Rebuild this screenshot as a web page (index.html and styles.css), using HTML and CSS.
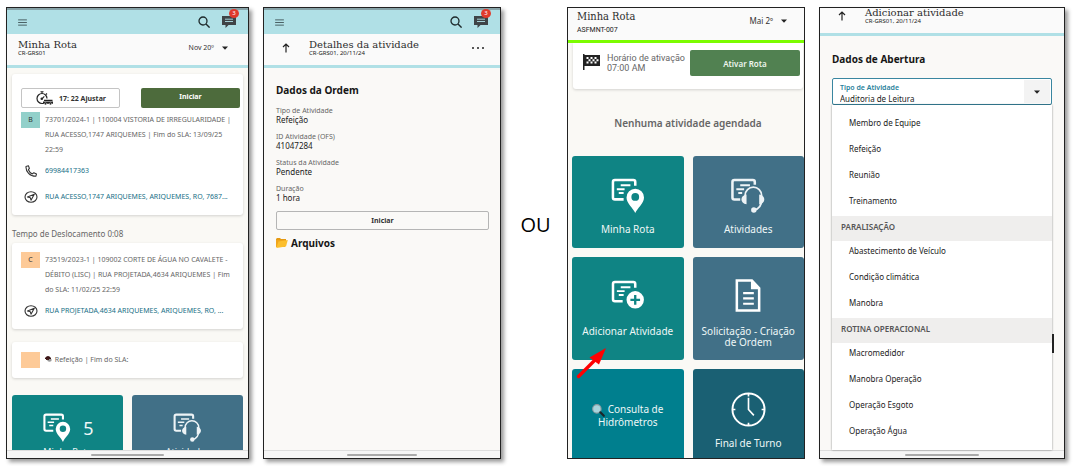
FILE: index.html
```html
<!DOCTYPE html>
<html lang="pt-BR">
<head>
<meta charset="utf-8">
<meta name="viewport" content="width=device-width, initial-scale=1">
<title>Minha Rota</title>
<link rel="stylesheet" href="styles.css">
</head>
<body>
<svg class="defs" aria-hidden="true">
  <symbol id="menu" viewBox="0 0 10 8"><path d="M0 1h10M0 4h10M0 7h10" stroke="#3d5054" stroke-width="1" fill="none"/></symbol>
  <symbol id="search" viewBox="0 0 12 12"><circle cx="5" cy="5" r="4" fill="none" stroke="#1e2a2c" stroke-width="1.3"/><path d="M8 8l3.6 3.6" stroke="#1e2a2c" stroke-width="1.4"/></symbol>
  <symbol id="chat" viewBox="0 0 14 12"><path d="M0 0h14v9H6.500l-3 3V9H0z" fill="#3f4447"/><path d="M3 3.200h8M3 5.500h8" stroke="#b0e0e6" stroke-width=".9"/></symbol>
  <symbol id="up" viewBox="0 0 8 10"><path d="M4 9.500V1M1 4l3-3 3 3" fill="none" stroke="#222" stroke-width="1.2"/></symbol>
  <symbol id="caret" viewBox="0 0 6 4"><path d="M0 .5h6L3 3.700z" fill="#222"/></symbol>
  <symbol id="timer" viewBox="0 0 18 14"><circle cx="7" cy="7.500" r="5" fill="none" stroke="#222" stroke-width="1.200" stroke-dasharray="25 7" stroke-dashoffset="-6"/><path d="M5.500 .7h3M7 .7v1.500M11 2.500l1 1M7 7.800l2.300-2.500" stroke="#222" stroke-width="1.100" fill="none"/><circle cx="6.800" cy="7.800" r="1.300" fill="#222"/><path d="M9 8.800h8.500v1.100H9zM8 10.500h10v2.200H8z" fill="#222"/><circle cx="10.500" cy="12.800" r="1.100" fill="#222" stroke="#fff" stroke-width=".4"/><circle cx="15.500" cy="12.800" r="1.100" fill="#222" stroke="#fff" stroke-width=".4"/></symbol>
  <symbol id="phone" viewBox="0 0 12 12"><path d="M1 1.500C.6 6.500 5 11.400 10.800 11.300L11.500 9 8.800 7.800 7.300 8.900C5.500 8 4.100 6.500 3.400 4.700L4.400 3.400 3.400.8z" fill="none" stroke="#333" stroke-width="1.100" stroke-linejoin="round"/></symbol>
  <symbol id="nav" viewBox="0 0 14 12"><ellipse cx="7" cy="6" rx="6" ry="5.300" fill="none" stroke="#333" stroke-width="1.100"/><path d="M10.300 3.300L3.500 6l2.800.7.7 2.500z" fill="none" stroke="#333" stroke-width="1.100" stroke-linejoin="round"/></symbol>
  <symbol id="pin-task" viewBox="0 0 34 36"><path d="M13 22H4a2 2 0 0 1-2-2V4a2 2 0 0 1 2-2h19a2 2 0 0 1 2 2v4" fill="none" stroke="#fff" stroke-width="2.600"/><path d="M10 7.500h10M6 11.500h8M8 15.500h5" stroke="#fff" stroke-width="2"/><path d="M25 36c-2-5-9-10-9-16a9 9 0 0 1 18 0c0 6-7 11-9 16z" fill="#fff"/><circle cx="25" cy="19.500" r="4" fill="#0f8484"/></symbol>
  <symbol id="headset-task" viewBox="0 0 36 36"><path d="M10 22H4a2 2 0 0 1-2-2V4a2 2 0 0 1 2-2h19a2 2 0 0 1 2 2v3" fill="none" stroke="#edf3f6" stroke-width="2.600"/><path d="M10 7.500h10M6 11.500h8M8 15.500h4" stroke="#edf3f6" stroke-width="2"/><path d="M15 20v-2a8.500 8.500 0 0 1 17 0v4c0 6-3 10-8 11" fill="none" stroke="#edf3f6" stroke-width="1.800"/><path d="M16.500 17v10c-7-1-7-9 0-10zM29.500 17v10c7-1 7-9 0-10z" fill="#edf3f6"/><circle cx="24" cy="33" r="2.800" fill="#edf3f6"/></symbol>
  <symbol id="plus-task" viewBox="0 0 34 30"><path d="M12 22H4a2 2 0 0 1-2-2V4a2 2 0 0 1 2-2h19a2 2 0 0 1 2 2v4" fill="none" stroke="#fff" stroke-width="2.600"/><path d="M10 7.500h10M6 11.500h8M8 15.500h5" stroke="#fff" stroke-width="2"/><circle cx="25" cy="20.500" r="9" fill="#fff"/><path d="M25 15.500v10M20 20.500h10" stroke="#0f8484" stroke-width="2.400"/></symbol>
  <symbol id="document" viewBox="0 0 26 34"><path d="M1.500 1.500H17l7.500 8v23h-23z" fill="none" stroke="#fff" stroke-width="2.600"/><path d="M16 1l9 9.500h-9z" fill="#fff"/><path d="M8 14.500h11M8 20h11M8 25.500h11" stroke="#fff" stroke-width="2.200"/></symbol>
  <symbol id="clock" viewBox="0 0 36 36"><circle cx="18" cy="18" r="16.500" fill="none" stroke="#fff" stroke-width="2"/><path d="M18 6v12l5.500 6M18 1.500v3M18 31.500v3M1.500 18h3M31.500 18h3" fill="none" stroke="#fff" stroke-width="1.700"/></symbol>
  <symbol id="flag" viewBox="0 0 17 17"><path d="M0 1h1.500v16H0zM1.500 2H17v11H1.500z" fill="#222"/><path d="M3.500 4h2v2h-2zM7.500 4h2v2h-2zM11.500 4h2v2h-2zM5.500 6.200h2v2h-2zM9.500 6.200h2v2h-2zM13.500 6.200h2v2h-2zM3.500 8.500h2v2h-2zM7.500 8.500h2v2h-2zM11.500 8.500h2v2h-2z" fill="#fff"/></symbol>
  <symbol id="folder" viewBox="0 0 12 10"><path d="M0 1l1-1h3l1 1h5v3H0z" fill="#e59a13"/><path d="M0 9V2h9v7z" fill="#f0a51b"/><path d="M2.500 3.500L11.800 2 10 8.500.3 10z" fill="#fcbf2d"/></symbol>
  <symbol id="lens" viewBox="0 0 12 12"><circle cx="4.500" cy="4.500" r="3.900" fill="#a9d4dc" stroke="#8d9ba0" stroke-width="1"/><path d="M7.700 7.700l3.200 3.200" stroke="#1d2528" stroke-width="2" stroke-linecap="round"/></symbol>
  <symbol id="meal" viewBox="0 0 7 6"><path d="M0 2q3-4 6 0v1H0z" fill="#3a1416"/><path d="M2 3h4.500v2q-2 1.500-4 0z" fill="#999"/><path d="M1 2.500h3V4H1z" fill="#4b2222"/></symbol>
</svg>
<main class="board">

  <section class="phone">
    <header class="appbar">
      <button class="plain" aria-label="Menu"><svg class="i-menu"><use href="#menu"/></svg></button>
      <button class="plain push" aria-label="Buscar"><svg class="i-search"><use href="#search"/></svg></button>
      <button class="plain chat" aria-label="Mensagens"><svg class="i-chat"><use href="#chat"/></svg><span class="count">3</span></button>
    </header>
    <div class="titlebar">
      <div><h1>Minha Rota</h1><p class="sub">CR-GRS01</p></div>
      <button class="plain date">Nov 20º <svg class="i-caret"><use href="#caret"/></svg></button>
    </div>
    <div class="route">
      <article class="card first">
        <div class="actions">
          <button class="adjust"><svg class="i-timer"><use href="#timer"/></svg>17: 22 Ajustar</button>
          <button class="start">Iniciar</button>
        </div>
        <div class="job"><span class="tag teal">B</span><p>73701/2024-1 | 110004 VISTORIA DE IRREGULARIDADE | RUA ACESSO,1747 ARIQUEMES | Fim do SLA: 13/09/25 22:59</p></div>
        <div class="contact"><svg class="i-phone"><use href="#phone"/></svg><a href="#tel">69984417363</a></div>
        <div class="contact"><svg class="i-nav"><use href="#nav"/></svg><a href="#map1">RUA ACESSO,1747 ARIQUEMES, ARIQUEMES, RO, 7687...</a></div>
      </article>
      <p class="travel">Tempo de Deslocamento 0:08</p>
      <article class="card">
        <div class="job"><span class="tag orange">C</span><p>73519/2023-1 | 109002 CORTE DE ÁGUA NO CAVALETE - DÉBITO (LISC) | RUA PROJETADA,4634 ARIQUEMES | Fim do SLA: 11/02/25 22:59</p></div>
        <div class="contact near"><svg class="i-nav"><use href="#nav"/></svg><a href="#map2">RUA PROJETADA,4634 ARIQUEMES, ARIQUEMES, RO, ...</a></div>
      </article>
      <article class="card meal">
        <div class="job"><span class="tag orange"></span><p><svg class="i-meal"><use href="#meal"/></svg> Refeição | Fim do SLA:</p></div>
      </article>
      <nav class="tiles small">
        <a class="tile green" href="#rota"><span class="pair"><svg class="i-pin"><use href="#pin-task"/></svg><b>5</b></span>Minha Rota</a>
        <a class="tile blue" href="#ativ"><svg class="i-head"><use href="#headset-task"/></svg>Atividades</a>
      </nav>
    </div>
    <footer class="home"><i></i></footer>
  </section>

  <section class="phone">
    <header class="appbar">
      <button class="plain" aria-label="Menu"><svg class="i-menu"><use href="#menu"/></svg></button>
      <button class="plain push" aria-label="Buscar"><svg class="i-search"><use href="#search"/></svg></button>
      <button class="plain chat" aria-label="Mensagens"><svg class="i-chat"><use href="#chat"/></svg><span class="count">3</span></button>
    </header>
    <div class="titlebar back">
      <button class="plain" aria-label="Voltar"><svg class="i-up"><use href="#up"/></svg></button>
      <div><h1>Detalhes da atividade</h1><p class="sub">CR-GRS01, 20/11/24</p></div>
      <button class="plain dots" aria-label="Mais"><i></i><i></i><i></i></button>
    </div>
    <div class="details">
      <h2>Dados da Ordem</h2>
      <dl>
        <div><dt>Tipo de Atividade</dt><dd>Refeição</dd></div>
        <div><dt>ID Atividade (OFS)</dt><dd>41047284</dd></div>
        <div><dt>Status da Atividade</dt><dd>Pendente</dd></div>
        <div><dt>Duração</dt><dd>1 hora</dd></div>
      </dl>
      <button class="outline">Iniciar</button>
      <h2 class="files"><svg class="i-folder"><use href="#folder"/></svg>Arquivos</h2>
    </div>
    <footer class="home"><i></i></footer>
  </section>

  <p class="or">OU</p>

  <section class="phone flat">
    <div class="titlebar lime">
      <div><h1>Minha Rota</h1><p class="sub">ASFMNT-007</p></div>
      <button class="plain date">Mai 2º <svg class="i-caret"><use href="#caret"/></svg></button>
    </div>
    <div class="start-day">
      <div class="activate">
        <svg class="i-flag"><use href="#flag"/></svg>
        <p>Horário de ativação<br>07:00 AM</p>
        <button>Ativar Rota</button>
      </div>
      <p class="empty">Nenhuma atividade agendada</p>
      <nav class="tiles">
        <a class="tile green" href="#m"><svg class="i-pin"><use href="#pin-task"/></svg>Minha Rota</a>
        <a class="tile blue" href="#a"><svg class="i-head"><use href="#headset-task"/></svg>Atividades</a>
        <a class="tile green" href="#add"><svg class="i-plus"><use href="#plus-task"/></svg>Adicionar Atividade
          <svg class="pointer" viewBox="0 0 32 32" aria-hidden="true"><path d="M2.500 29.500L20 12" stroke="#f00" stroke-width="3.400" stroke-linecap="round"/><path d="M30 1L13.500 10.500l9.500 7z" fill="#f00"/></svg></a>
        <a class="tile blue" href="#s"><svg class="i-doc"><use href="#document"/></svg>Solicitação - Criação de Ordem</a>
        <a class="tile cyan" href="#c"><span><svg class="i-lens"><use href="#lens"/></svg> Consulta de<br>Hidrômetros</span></a>
        <a class="tile deep" href="#f"><svg class="i-clock"><use href="#clock"/></svg>Final de Turno</a>
      </nav>
    </div>
  </section>

  <section class="phone">
    <div class="titlebar back scrolled">
      <button class="plain" aria-label="Voltar"><svg class="i-up"><use href="#up"/></svg></button>
      <div><h1>Adicionar atividade</h1><p class="sub">CR-GRS01, 20/11/24</p></div>
    </div>
    <div class="form">
      <h2>Dados de Abertura</h2>
      <div class="field">
        <div class="value">
          <label for="tipo">Tipo de Atividade</label>
          <select id="tipo"><option>Auditoria de Leitura</option></select>
        </div>
        <span class="drop"><svg class="i-caret"><use href="#caret"/></svg></span>
      </div>
      <div class="options">
        <ul class="lead"><li>Membro de Equipe</li><li>Refeição</li><li>Reunião</li><li>Treinamento</li></ul>
        <h3>PARALISAÇÃO</h3>
        <ul><li>Abastecimento de Veículo</li><li>Condição climática</li><li>Manobra</li></ul>
        <h3>ROTINA OPERACIONAL</h3>
        <ul><li>Macromedidor</li><li>Manobra Operação</li><li>Operação Esgoto</li><li>Operação Água</li></ul>
      </div>
      <i class="thumb"></i>
    </div>
    <footer class="home"><i></i></footer>
  </section>
</main>
</body>
</html>
```
FILE: styles.css
```css
* { box-sizing: border-box; }
body { margin: 0; background: #fff; color: #333; font: 7px/15px "Noto Sans", "Open Sans", sans-serif; }
h1, h2, h3, p, dl, dd, ul { margin: 0; padding: 0; }
ul { list-style: none; }
a { text-decoration: none; color: inherit; }
button, select { font: inherit; color: inherit; padding: 0; border: 0; background: none; }
svg { display: block; flex: none; }
.defs { position: absolute; width: 0; height: 0; }

.board {
  display: grid;
  grid-template-columns: 243fr 238fr 38px 238fr 246fr;
  grid-template-rows: minmax(0, 1fr);
  gap: 14px;
  height: 100vh;
  padding: 7px 8px 7px 6px;
}
.phone {
  display: flex;
  flex-direction: column;
  min-width: 0;
  overflow: hidden;
  border: 1px solid #222;
  background: #faf9f7;
  box-shadow: 3px 3px 4px rgba(0, 0, 0, .4);
}
.phone.flat { box-shadow: none; }
.or { align-self: center; text-align: center; color: #000; font: 20px/24px "Open Sans", sans-serif; padding: 0 0 16px 3px; }

.plain { display: flex; align-items: center; }
.push { margin-left: auto; }
.appbar {
  display: flex;
  flex: none;
  align-items: center;
  height: 26px;
  padding: 0 12px 0 11px;
  border-top: 2px solid #87a3a8;
  background: #b0e0e6;
}
.chat { position: relative; margin-left: 12px; }
.count {
  position: absolute; top: -7px; right: -3px;
  width: 10px; height: 9px; border-radius: 50%;
  background: #e03a2c; color: #fff; font-size: 6px; line-height: 9px; text-align: center;
}
.titlebar {
  display: flex;
  flex: none;
  align-items: center;
  justify-content: space-between;
  height: 34px;
  padding: 0 20px 3px 11px;
  border-bottom: 3px solid #b0e0e6;
  background: #fafafa;
}
.titlebar h1 { font: 10px/11px "DejaVu Serif", serif; color: #2c2c2c; white-space: nowrap; }
.sub { font-size: 6px; line-height: 7px; color: #222; white-space: nowrap; }
.date { gap: 8px; line-height: 12px; white-space: nowrap; }
.back { justify-content: flex-start; padding: 0 16px 3px 18px; }
.back > div { margin-left: 19px; }
.dots { gap: 3px; margin-left: auto; }
.dots i { width: 2px; height: 2px; border-radius: 50%; background: #222; }
.scrolled { height: 28px; padding: 0 16px 9px 18px; }
.lime { height: 35px; padding: 0 17px 2px 9px; border-color: #7cfc00; }
.lime h1 { font: 11px/14px "DejaVu Serif", serif; font-stretch: condensed; }
.lime .sub { font: 7px/12px Roboto, sans-serif; }
.lime .date { font-size: 8px; padding-bottom: 4px; }

.route { flex: 1; min-height: 0; overflow: hidden; padding: 6px 5px 0; background: #faf9f5; }
.card { padding: 9px 8px 11px 9px; border-radius: 3px; background: #fff; box-shadow: 0 1px 3px rgba(0, 0, 0, .16); }
.card.first { padding: 14px 3px 11px 9px; }
.actions { display: grid; grid-template-columns: 1fr 1fr; gap: 21px; margin-bottom: 4px; }
.actions button { display: flex; align-items: center; justify-content: center; gap: 6px; height: 20px; border-radius: 2px; font-weight: 700; }
.adjust { border: 1px solid #c4c4c4; }
.actions .start { background: #4d6b3c; color: #fff; padding-bottom: 3px; }
.job { display: flex; gap: 5px; margin-right: -3px; color: #666; }
.first .job { margin-right: 3px; }
.job p { flex: 1; }
.tag { flex: none; width: 19px; height: 16px; color: #333; text-align: center; }
.teal { background: #92d0ca; }
.orange { background: #fdca98; }
.contact { display: grid; grid-template-columns: 19px minmax(0, 1fr); gap: 5px; align-items: center; justify-items: center; margin: 6px 0 11px; color: #176f86; }
.contact a { justify-self: stretch; overflow: hidden; white-space: nowrap; text-overflow: ellipsis; }
.contact + .contact, .contact.near { margin-bottom: 0; }
.travel { font-size: 8px; line-height: 16px; color: #666; padding: 11px 0 1px; }
.card.meal { margin: 13px 0 17px; padding: 10px 9px; }
.meal .i-meal { display: inline-block; margin-right: 1px; }
.tiles { display: grid; grid-template-columns: 1fr 1fr; grid-template-rows: 92px 103px 103px; gap: 9px; }
.small { grid-template-rows: 92px; }
.tile {
  display: flex;
  flex-direction: column;
  align-items: center;
  gap: 11px;
  padding: 22px 8px 0;
  border-radius: 3px;
  color: #eef7f7;
  font: 10px/11px "Noto Sans", sans-serif;
  text-align: center;
}
.small .tile { padding-top: 18px; gap: 4px; font-size: 9px; }
.green { position: relative; background: #0f8484; }
.blue { background: #417087; }
.cyan { background: #007f8e; justify-content: center; padding: 0 0 9px; }
.deep { background: #1a6073; }
.pair { display: flex; gap: 11px; align-items: center; }
.pair b { font: 18px/20px "Noto Sans", sans-serif; }
.pointer { position: absolute; left: 4px; bottom: -19px; width: 32px; height: 32px; z-index: 1; }

.details { flex: 1; min-height: 0; overflow: hidden; padding: 14px 11px 0 12px; }
h2 { font-size: 10px; line-height: 16px; font-weight: 700; color: #161616; }
dl { display: grid; gap: 8px; padding: 8px 0 9px; }
dl dt { line-height: 9px; color: #666; }
dl dd { font-size: 8px; line-height: 9px; color: #222; }
.outline { display: block; width: 100%; height: 19px; border: 1px solid #b5b5b5; border-radius: 2px; font-weight: 700; line-height: 15px; }
.files { display: flex; align-items: center; gap: 3px; margin-top: 5px; }

.start-day { flex: 1; min-height: 0; overflow: hidden; padding: 0 0 0 4px; background: #faf9f5; }
.activate { display: flex; align-items: flex-start; margin: 0 1px; padding: 7px 3px 13px 10px; border-radius: 0 0 3px 3px; background: #fff; box-shadow: 0 1px 3px rgba(0, 0, 0, .16); }
.activate p { flex: 1; margin: 3px 0 0 7px; font: 9px/10px Roboto, sans-serif; color: #666; white-space: nowrap; }
.activate button { width: 110px; height: 26px; border-radius: 2px; background: #518151; color: #eef5ee; font-size: 8px; font-weight: 600; }
.activate .i-flag { margin-top: 3px; }
.empty { padding: 27px 0 25px; font-size: 10px; font-weight: 600; text-align: center; color: #666; }

.form { position: relative; flex: 1; min-height: 0; display: flex; flex-direction: column; padding: 15px 12px 0; }
.field { display: flex; flex: none; height: 27px; margin-top: 11px; border: 1px solid #3986a0; border-radius: 2px; background: #fff; }
.value { display: flex; flex: 1; flex-direction: column; padding: 4px 0 0 7px; }
.value label { line-height: 10px; font-weight: 600; color: #287f9b; }
.value select { appearance: none; font-size: 8px; line-height: 11px; color: #222; }
.drop { display: grid; place-items: center; width: 26px; margin: 1px; background: #f3f3f3; }
.options { flex: 1; min-height: 0; overflow: hidden; background: #fff; box-shadow: 0 0 2px rgba(0, 0, 0, .45); color: #222; font-size: 8px; line-height: 16px; }
.options ul { display: grid; gap: 10px; padding: 2px 17px 7px; }
.options .lead { padding-top: 10px; }
h3 { margin: 0; padding: 0 9px 3px; background: #efeeed; color: #555; font-size: 8px; line-height: 22px; font-weight: 600; }
.thumb { position: absolute; right: 10px; bottom: 97px; width: 2px; height: 19px; background: #222; }

.home { display: grid; flex: none; place-items: center; height: 8px; border-top: 1px solid #ddd; background: #f6f6f6; }
.home i { width: 30%; height: 2px; border-radius: 1px; background: #aaa; }

.i-menu { width: 9px; height: 7px; }
.i-search { width: 12px; height: 12px; }
.i-chat { width: 14px; height: 12px; }
.i-up { width: 8px; height: 10px; }
.i-caret { width: 6px; height: 4px; }
.i-timer { width: 18px; height: 14px; }
.i-phone { width: 12px; height: 12px; }
.i-nav { width: 14px; height: 12px; }
.i-pin { width: 33px; height: 35px; }
.i-head { width: 36px; height: 35px; }
.i-plus { width: 33px; height: 29px; margin: 1px 0 6px; }
.i-doc { width: 26px; height: 33px; margin-bottom: 3px; }
.i-clock { width: 35px; height: 35px; margin-top: 1px; }
.i-flag { width: 17px; height: 17px; }
.i-folder { width: 12px; height: 10px; }
.i-lens { display: inline-block; width: 13px; height: 13px; vertical-align: middle; }
.i-meal { width: 7px; height: 6px; }
.small .i-pin, .small .i-head { width: 31px; height: 29px; }
```
